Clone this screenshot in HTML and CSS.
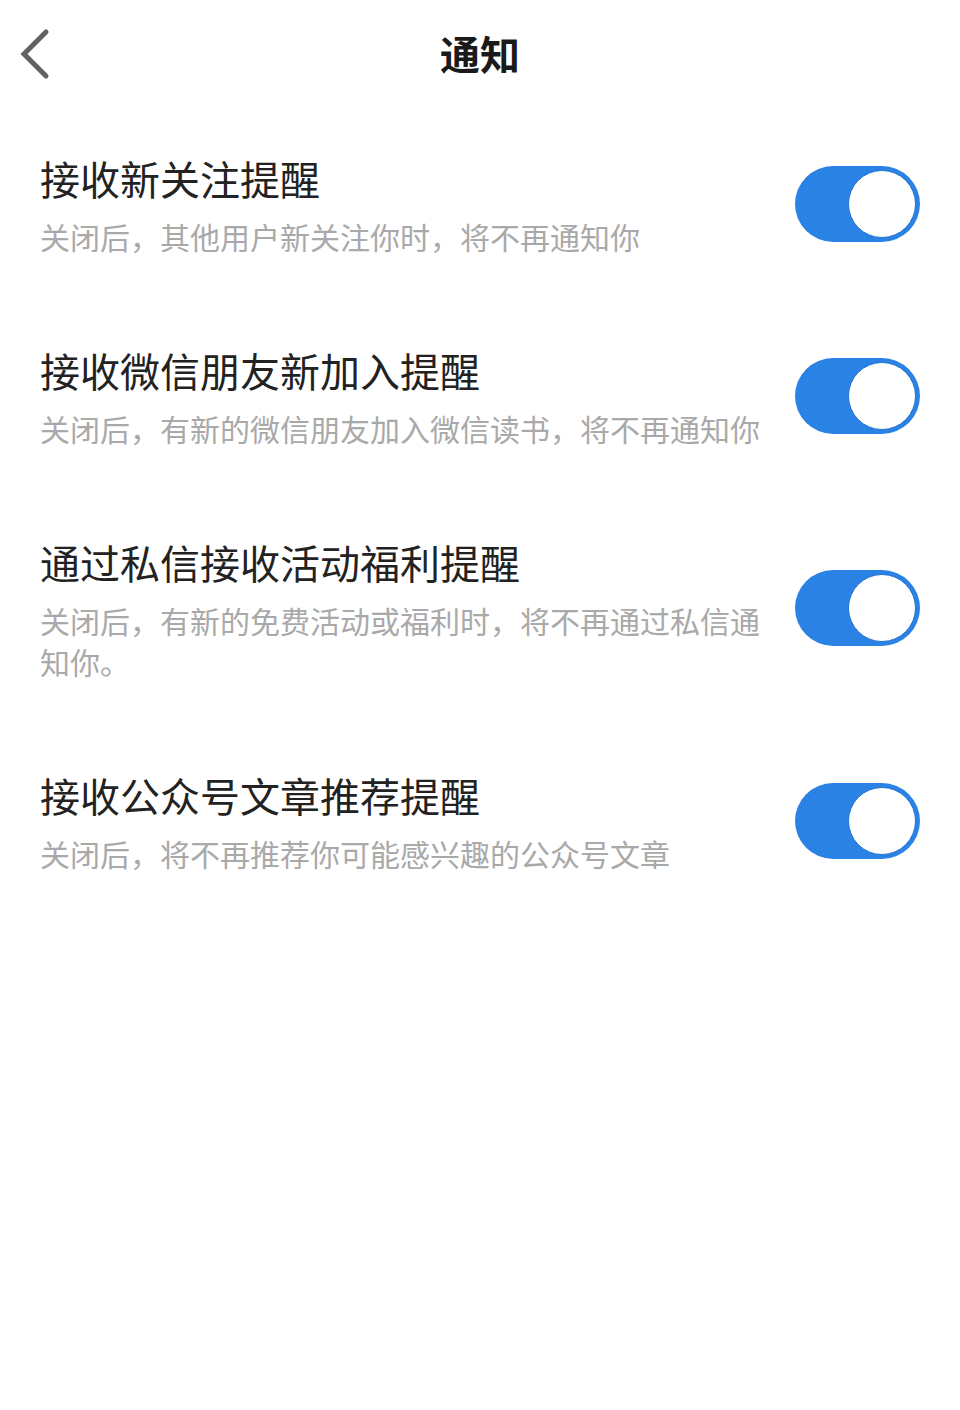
FILE: index.html
```html
<!DOCTYPE html>
<html lang="zh-CN">
<head>
<meta charset="utf-8">
<title>通知</title>
<link rel="stylesheet" href="styles.css">
</head>
<body>
<header class="nav">
  <svg class="back" width="40" height="60" viewBox="0 0 40 60" aria-hidden="true">
    <polyline points="28,8 6,30 28,52" fill="none" stroke="#626262" stroke-width="5" stroke-linecap="round" stroke-linejoin="miter"/>
  </svg>
  <h1 class="title">通知</h1>
</header>
<main class="list">
  <div class="item">
    <div class="text">
      <div class="name">接收新关注提醒</div>
      <div class="desc">关闭后，其他用户新关注你时，将不再通知你</div>
    </div>
    <div class="switch"><div class="knob"></div></div>
  </div>
  <div class="item">
    <div class="text">
      <div class="name">接收微信朋友新加入提醒</div>
      <div class="desc">关闭后，有新的微信朋友加入微信读书，将不再通知你</div>
    </div>
    <div class="switch"><div class="knob"></div></div>
  </div>
  <div class="item">
    <div class="text">
      <div class="name">通过私信接收活动福利提醒</div>
      <div class="desc">关闭后，有新的免费活动或福利时，将不再通过私信通知你。</div>
    </div>
    <div class="switch"><div class="knob"></div></div>
  </div>
  <div class="item">
    <div class="text">
      <div class="name">接收公众号文章推荐提醒</div>
      <div class="desc">关闭后，将不再推荐你可能感兴趣的公众号文章</div>
    </div>
    <div class="switch"><div class="knob"></div></div>
  </div>
</main>
</body>
</html>
```
FILE: styles.css
```css
html, body {
  margin: 0;
  padding: 0;
  background: #ffffff;
}
body {
  width: 960px;
  min-height: 1410px;
  font-family: "Noto Sans CJK SC", "Noto Sans", sans-serif;
}
.nav {
  position: relative;
  height: 106px;
  display: flex;
  align-items: center;
  justify-content: center;
}
.back {
  position: absolute;
  left: 18px;
  top: 24px;
}
.title {
  margin: 0;
  font-size: 40px;
  font-weight: 700;
  line-height: 106px;
  color: #1a1a1a;
}
.list {
  display: flex;
  flex-direction: column;
  padding-top: 2px;
}
.item {
  display: flex;
  align-items: center;
  justify-content: space-between;
  padding: 42px 40px 43px 40px;
}
.text {
  width: 736px;
  display: flex;
  flex-direction: column;
  gap: 10px;
}
.name {
  font-size: 40px;
  line-height: 56px;
  color: #222222;
}
.desc {
  font-size: 30px;
  line-height: 41px;
  color: #a9a9a9;
}
.switch {
  flex: none;
  width: 125px;
  height: 76px;
  border-radius: 38px;
  background: #2a82e4;
  box-sizing: border-box;
  padding: 4px;
  display: flex;
  justify-content: flex-end;
  align-items: center;
}
.knob {
  width: 66px;
  height: 66px;
  border-radius: 50%;
  background: #ffffff;
  border: 1px solid #2375d4;
}
```
